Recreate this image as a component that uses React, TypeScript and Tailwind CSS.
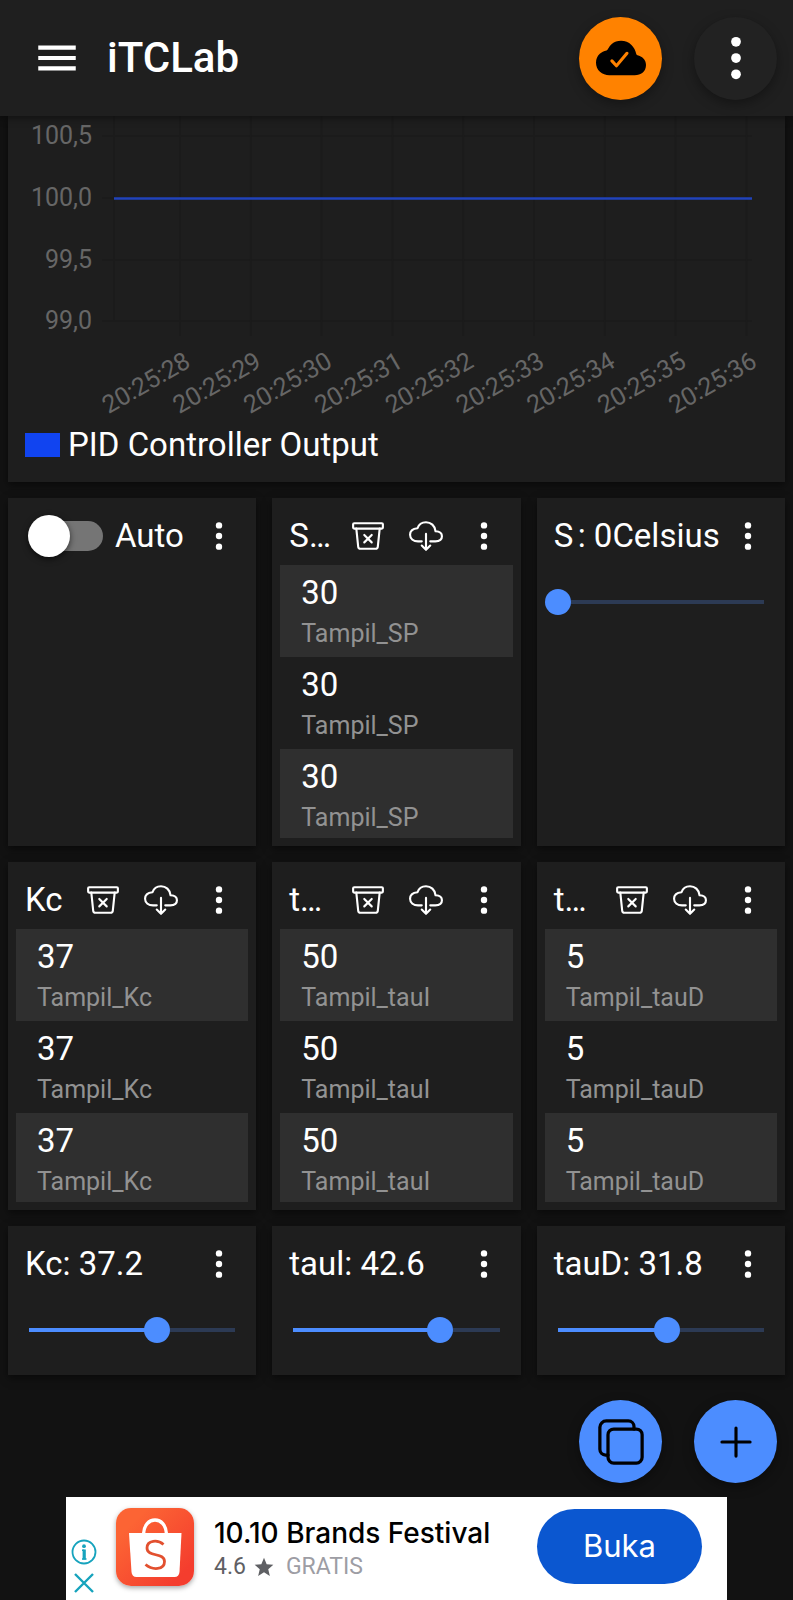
import { useState, type ReactNode } from "react";
import {
  IoAdd,
  IoCloudDone,
  IoCloudDownloadOutline,
  IoCopyOutline,
  IoEllipsisVertical,
  IoMenuSharp,
  IoTrashBinOutline,
} from "react-icons/io5";

const Y_TICKS = [
  { label: "100,5", y: 20 },
  { label: "100,0", y: 82 },
  { label: "99,5", y: 144 },
  { label: "99,0", y: 205 },
];

const X_TICKS = [
  "20:25:28",
  "20:25:29",
  "20:25:30",
  "20:25:31",
  "20:25:32",
  "20:25:33",
  "20:25:34",
  "20:25:35",
  "20:25:36",
];

const tickX = (i: number) => 172 + i * 70.8;

function Chart() {
  return (
    <section className="bg-[#1e1e1e] px-4 pb-[14px] shadow-[0_3px_8px_rgba(0,0,0,0.5)]">
      <svg viewBox="16 0 745 306" className="block w-full" role="img" aria-label="PID Controller Output">
        <g stroke="#1b1b1b" strokeWidth="2">
          {Y_TICKS.map((t) => (
            <line key={t.label} x1="94" x2="744" y1={t.y} y2={t.y} />
          ))}
          <line x1="106" x2="106" y1="0" y2="206" />
          {X_TICKS.map((t, i) => (
            <line key={t} x1={tickX(i)} x2={tickX(i)} y1="0" y2="220" />
          ))}
        </g>
        <line x1="106" x2="744" y1="82.5" y2="82.5" stroke="#2143bb" strokeWidth="2.5" />
        <g fill="#666666" fontSize="25" fontFamily="Roboto, sans-serif" textAnchor="end">
          {Y_TICKS.map((t) => (
            <text key={t.label} x="84" y={t.y + 8}>
              {t.label}
            </text>
          ))}
          {X_TICKS.map((t, i) => (
            <text key={t} transform={`translate(${tickX(i) + 12} 250) rotate(-30)`}>
              {t}
            </text>
          ))}
        </g>
      </svg>
      <div className="flex items-center gap-2 pl-px text-[33px] leading-[46px] text-white">
        <span className="h-6 w-[35px] bg-[#1144f0]" />
        <span>PID Controller Output</span>
      </div>
    </section>
  );
}

function IconButton({ label, children }: { label: string; children: ReactNode }) {
  return (
    <button type="button" aria-label={label} className="flex h-12 w-[58px] shrink-0 items-center justify-center">
      {children}
    </button>
  );
}

function Card({ title, log = false, children }: { title: ReactNode; log?: boolean; children?: ReactNode }) {
  return (
    <section className="min-w-0 bg-[#1e1e1e] px-2 pb-2 shadow-[0_3px_8px_rgba(0,0,0,0.5)]">
      <header className="flex h-[67px] items-center pt-2">
        <div className="min-w-0 grow whitespace-nowrap pl-[9px] text-[33px] leading-10">{title}</div>
        {log && (
          <>
            <IconButton label="Clear">
              <IoTrashBinOutline size={34} />
            </IconButton>
            <IconButton label="Download">
              <IoCloudDownloadOutline size={34} />
            </IconButton>
          </>
        )}
        <IconButton label="More">
          <IoEllipsisVertical size={34} />
        </IconButton>
      </header>
      {children}
    </section>
  );
}

function LogCard({ title, value, topic }: { title: string; value: string; topic: string }) {
  return (
    <Card title={title} log>
      <ul className="h-[273px] overflow-hidden">
        {[0, 1, 2].map((i) => (
          <li key={i} className="h-[92px] px-[21px] pt-2 odd:bg-[#2f2f2f]">
            <p className="text-[33px] leading-10">{value}</p>
            <p className="text-[25px] leading-[42px] text-[#929292]">{topic}</p>
          </li>
        ))}
      </ul>
    </Card>
  );
}

function SliderCard({ title, initial, unit = "" }: { title: string; initial: number; unit?: string }) {
  const [value, setValue] = useState(initial);
  const percent = (value / 60) * 100;
  return (
    <Card
      title={
        <>
          <span className="inline-block min-w-6">{title}</span>: {value}
          {unit}
        </>
      }
    >
      <div className="flex h-[74px] items-center">
        <input
          type="range"
          aria-label={title}
          min={0}
          max={60}
          step={0.1}
          value={value}
          onChange={(e) => setValue(Number(e.target.value))}
          className="h-[26px] w-full appearance-none bg-[length:calc(100%-26px)_4px] bg-center bg-no-repeat [&::-webkit-slider-thumb]:size-[26px] [&::-webkit-slider-thumb]:appearance-none [&::-webkit-slider-thumb]:rounded-full [&::-webkit-slider-thumb]:bg-[#4c8dff]"
          style={{
            backgroundImage: `linear-gradient(to right, #4c8dff ${percent}%, #2c3a54 ${percent}%)`,
          }}
        />
      </div>
    </Card>
  );
}

function ToggleCard() {
  const [on, setOn] = useState(false);
  return (
    <Card
      title={
        <label className="flex items-center gap-3">
          <input
            type="checkbox"
            role="switch"
            checked={on}
            onChange={(e) => setOn(e.target.checked)}
            className="ml-[5px] flex h-[30px] w-[73px] appearance-none items-center rounded-full bg-[#757575] before:-ml-0.5 before:size-[42px] before:shrink-0 before:rounded-full before:bg-white before:shadow-[0_2px_6px_rgba(0,0,0,0.6)] checked:justify-end checked:bg-[#4c8dff]"
          />
          Auto
        </label>
      }
    />
  );
}

function ShopLogo() {
  return (
    <svg viewBox="0 0 78 78" className="size-[78px] shrink-0 rounded-[15px] shadow-[0_2px_5px_rgba(0,0,0,0.35)]" aria-hidden="true">
      <defs>
        <linearGradient id="shop" x1="0" y1="0" x2="1" y2="1">
          <stop offset="0.2" stopColor="#fc6434" />
          <stop offset="0.85" stopColor="#f43d2e" />
        </linearGradient>
      </defs>
      <rect width="78" height="78" fill="url(#shop)" />
      <path d="M27.500 26C28 17 33 12 39 12S50 17 50.500 26" fill="none" stroke="#fff" strokeWidth="3.400" />
      <path d="M13 25H65.500L63.500 64Q63 69 58.500 69H20.500Q16 69 15.500 64Z" fill="#fff" />
      <path
        d="M47.500 36.500C42 31.500 31 32 31 40C31 49.500 48.500 44 48.500 53.500C48.500 62 36.500 62.500 29.500 56.500"
        fill="none"
        stroke="#e2502f"
        strokeWidth="2.800"
      />
    </svg>
  );
}

function AdBanner() {
  return (
    <aside className="mx-auto flex h-[103px] w-full max-w-[661px] items-center bg-white pb-1 pl-[5px] pr-[25px] text-black">
      <div className="flex w-[26px] shrink-0 flex-col items-center gap-2 self-end pb-[3px] text-[#16a3bd]">
        <button type="button" aria-label="Ad info">
          <svg viewBox="0 0 26 26" className="block size-[26px]" fill="none" stroke="currentColor">
            <circle cx="13" cy="13" r="11.500" strokeWidth="1.800" />
            <circle cx="13" cy="7.200" r="1.900" fill="currentColor" stroke="none" />
            <path d="M11 11.200H13.300M11 20H15.500" strokeWidth="1.400" />
            <path d="M13.200 10.500V20.500" strokeWidth="3.200" />
          </svg>
        </button>
        <button type="button" aria-label="Close ad">
          <svg viewBox="0 0 20 20" className="block size-5" fill="none" stroke="currentColor" strokeWidth="2.400">
            <path d="M1 1L19 19M19 1L1 19" />
          </svg>
        </button>
      </div>
      <div className="ml-[19px] flex min-w-0 grow items-center gap-5">
        <ShopLogo />
        <div className="min-w-0 grow pt-1">
          <h2 className="truncate font-['Inter',sans-serif] text-[28px] font-medium leading-9">10.10 Brands Festival</h2>
          <p className="flex items-center text-[23px] leading-8 text-[#5f6064]">
            4.6
            <svg viewBox="0 0 24 24" className="ml-2 mr-3 size-5" fill="currentColor" aria-hidden="true">
              <path d="M12 1l3.200 7.600 8 .7-6.100 5.400 1.900 8L12 18.400 5 22.700l1.900-8L.8 9.300l8-.7z" />
            </svg>
            <span className="text-[#9d9da4]">GRATIS</span>
          </p>
        </div>
      </div>
      <button
        type="button"
        className="h-[75px] w-[165px] shrink-0 rounded-full bg-[#0b57d0] font-['Inter',sans-serif] text-[31px] text-white"
      >
        Buka
      </button>
    </aside>
  );
}

const ROUND = "flex size-[83px] shrink-0 items-center justify-center rounded-full shadow-[0_4px_12px_rgba(0,0,0,0.35)]";

export default function App() {
  return (
    <div className="flex min-h-screen flex-col bg-[#121212] font-['Roboto',sans-serif] text-white">
      <header className="relative flex h-[116px] items-center bg-[#1f1f1f] pl-8 pr-4 shadow-[0_2px_8px_rgba(0,0,0,0.45)]">
        <button type="button" aria-label="Menu">
          <IoMenuSharp size={50} />
        </button>
        <h1 className="ml-[25px] grow text-[42px] font-medium leading-none">iTCLab</h1>
        <div className="flex gap-8">
          <button type="button" aria-label="Connected" className={`${ROUND} bg-[#ff8200] text-black`}>
            <IoCloudDone size={50} />
          </button>
          <button type="button" aria-label="More" className={`${ROUND} bg-[#222222]`}>
            <IoEllipsisVertical size={52} />
          </button>
        </div>
      </header>

      <main className="flex flex-col gap-4 px-2">
        <Chart />
        <div className="grid grid-cols-3 gap-4">
          <ToggleCard />
          <LogCard title="S…" value="30" topic="Tampil_SP" />
          <SliderCard title="S" initial={0} unit="Celsius" />
          <LogCard title="Kc" value="37" topic="Tampil_Kc" />
          <LogCard title="t…" value="50" topic="Tampil_tauI" />
          <LogCard title="t…" value="5" topic="Tampil_tauD" />
          <SliderCard title="Kc" initial={37.2} />
          <SliderCard title="taul" initial={42.6} />
          <SliderCard title="tauD" initial={31.8} />
        </div>
      </main>

      <div className="mt-auto flex justify-end gap-8 px-4 pb-[14px] pt-6 text-black">
        <button type="button" aria-label="Duplicate" className={`${ROUND} bg-[#4c8dff]`}>
          <IoCopyOutline size={52} />
        </button>
        <button type="button" aria-label="Add" className={`${ROUND} bg-[#4c8dff]`}>
          <IoAdd size={50} />
        </button>
      </div>
      <AdBanner />
    </div>
  );
}
